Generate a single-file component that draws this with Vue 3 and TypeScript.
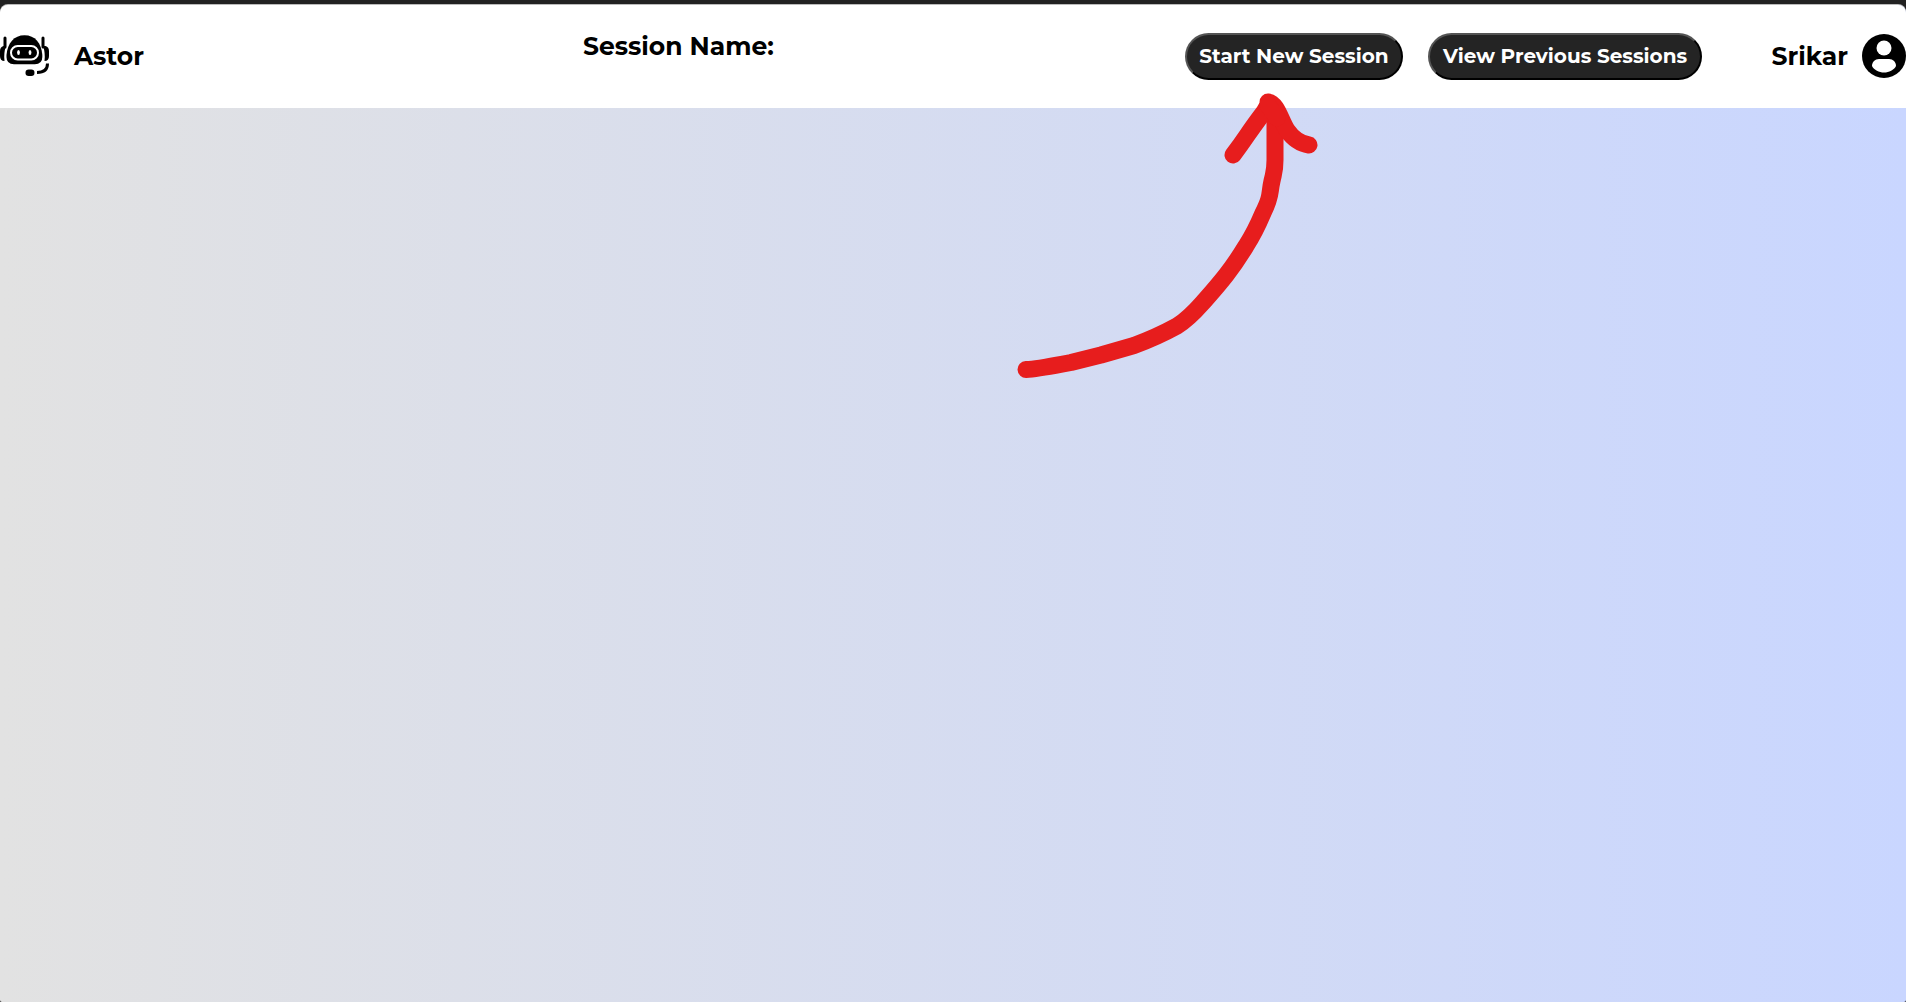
<script setup lang="ts">
const appName = 'Astor'
const userName = 'Srikar'
const actions: { label: string; kind: string }[] = [
  { label: 'Start New Session', kind: 'start' },
  { label: 'View Previous Sessions', kind: 'history' },
]
</script>

<template>
  <div class="frame">
    <div class="page">
      <header class="bar">
        <div class="brand">
          <svg class="bot" viewBox="0 0 49 44" aria-hidden="true">
            <path d="M6.500 21C7.500 9 14 1.200 24.500 1.200S41.500 9 42.300 21v2q0 7.200-7.500 7.200H14q-7.500 0-7.500-7.200z" />
            <rect x="11" y="12" width="27" height="13.500" rx="6.700" fill="none" stroke="#fff" stroke-width="2" />
            <ellipse cx="18.500" cy="18.500" rx="1.400" ry="2.500" fill="#fff" />
            <ellipse cx="30" cy="18.500" rx="1.400" ry="2.500" fill="#fff" />
            <path d="M5 4v9M43 4v9" fill="none" stroke="#000" stroke-width="3" stroke-linecap="round" />
            <path d="M3.500 12h2.500Q3.500 19 4.500 27 0 27 0 22v-5q0-4 3.500-5zM45.500 12H43q2.500 7 1.500 15 4.500 0 4.500-5v-5q0-4-3.500-5z" />
            <path d="M47.500 29.500q0 9-10.500 9" fill="none" stroke="#000" stroke-width="3" />
            <rect x="25.500" y="35.500" width="9" height="6.500" rx="3.200" />
          </svg>
          <span>{{ appName }}</span>
        </div>
        <h1 class="title">Session Name:</h1>
        <nav class="actions">
          <button v-for="a in actions" :key="a.kind" type="button" :class="a.kind">{{ a.label }}</button>
        </nav>
        <div class="user">
          <span>{{ userName }}</span>
          <svg class="avatar" viewBox="0 0 44 44" aria-hidden="true">
            <circle cx="22" cy="22" r="22" />
            <circle cx="22" cy="14" r="7.500" fill="#fff" />
            <path d="M10 32c0-4 3-7 7-7h10c4 0 7 3 7 7-2 4-7 6.500-12 6.500S12 36 10 32z" fill="#fff" />
          </svg>
        </div>
      </header>
      <main class="canvas">
        <svg class="arrow" viewBox="0 0 350 310" aria-hidden="true">
          <path d="M26 289.500C38 289 52 286 71 282.500L101 275L134 265.500Q157 257 177 246C190 238 197 229 206 219C221 202 232 189 246 166Q255 152 263 133C272 115 269 114 272 101C275 88 275 90 275 80V40" />
          <path d="M233 75C249 54 245 57 264 32L268 25V22C277 23 281 41 287 50Q296 63 309 65" />
          <path d="M268 25L277 38" />
        </svg>
      </main>
    </div>
  </div>
</template>

<style>
body {
  margin: 0;
  background: #222;
}
</style>

<style scoped>
.frame {
  box-sizing: border-box;
  min-height: 100vh;
  padding-top: 4px;
  display: flex;
  background: #222;
  color: #000;
  font-family: Montserrat, Inter, sans-serif;
}

.page {
  box-sizing: border-box;
  flex: 1;
  min-width: 0;
  display: flex;
  flex-direction: column;
  border-top: 1px solid #bbb;
  border-radius: 8px 8px 2px 2px;
  background: linear-gradient(to right, #e2e2e2, #c9d6ff);
}

.bar {
  display: grid;
  grid-template-columns: 583fr 602fr 517fr 204fr;
  align-items: center;
  height: 103px;
  background: #fff;
  border-radius: 8px 8px 0 0;
}

.brand,
.user,
.title {
  font-size: 25px;
  font-weight: 700;
  line-height: 32px;
  white-space: nowrap;
}

.brand,
.user {
  display: flex;
  align-items: center;
  padding-bottom: 1px;
}

.brand {
  gap: 25px;
}

.bot {
  width: 49px;
  height: 44px;
}

.title {
  align-self: start;
  margin: 25px 0 0;
}

.actions {
  display: flex;
  justify-content: space-between;
}

.actions button {
  box-sizing: border-box;
  height: 47px;
  padding: 0 0 2px;
  border: 2px outset #000;
  border-radius: 24px;
  background: #242424;
  color: #fff;
  font-family: inherit;
  font-size: 20px;
  font-weight: 700;
  line-height: 24px;
  white-space: nowrap;
}

.start {
  width: 218px;
}

.history {
  width: 274px;
}

.user {
  justify-content: flex-end;
  gap: 14px;
}

.avatar {
  width: 44px;
  height: 44px;
}

.canvas {
  position: relative;
  flex: 1;
}

.arrow {
  position: absolute;
  top: -28px;
  right: 556px;
  width: 350px;
  height: 310px;
  fill: none;
  stroke: #e71d1d;
  stroke-width: 17;
  stroke-linecap: round;
  stroke-linejoin: round;
}
</style>
